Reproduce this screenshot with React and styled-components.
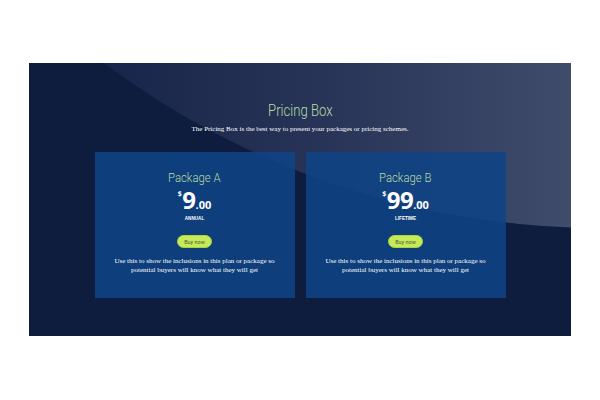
import React from 'react'
import styled, { createGlobalStyle } from 'styled-components'

const GlobalStyle = createGlobalStyle`
  html, body {
    margin: 0;
    padding: 0;
    background: #ffffff;
  }
  #root {
    width: 600px;
    height: 400px;
    padding: 63px 29px;
    box-sizing: border-box;
  }
`

const Section = styled.section`
  position: relative;
  overflow: hidden;
  height: 273px;
  background: #0e1c3e;
  display: flex;
  flex-direction: column;
  align-items: center;
  padding-top: 37px;
  box-sizing: border-box;

  &::before {
    content: '';
    position: absolute;
    left: -257px;
    top: -1491px;
    width: 1656px;
    height: 1656px;
    border-radius: 50%;
    background: linear-gradient(90deg, #18254a 330px, #283558 560px, #3f4c6b 800px);
  }
`

const Title = styled.h1`
  position: relative;
  margin: 0;
  font-family: Roboto, "Liberation Sans", sans-serif;
  font-weight: 300;
  font-size: 16px;
  line-height: 22px;
  color: #b9dca2;
  transform: scaleX(0.82);
`

const Subtitle = styled.p`
  position: relative;
  margin: 2px 0 0;
  font-family: "Liberation Serif", serif;
  font-size: 7px;
  line-height: 10px;
  color: #ffffff;
`

const Cards = styled.div`
  position: relative;
  display: flex;
  gap: 11px;
  margin-top: 18px;
`

const Card = styled.div`
  width: 200px;
  height: 146px;
  box-sizing: border-box;
  padding-top: 17px;
  background: rgba(14, 68, 134, 0.86);
  display: flex;
  flex-direction: column;
  align-items: center;
`

const PackageName = styled.h2`
  margin: 0;
  font-family: Roboto, "Liberation Sans", sans-serif;
  font-weight: 300;
  font-size: 13.5px;
  line-height: 16px;
  color: #b9dca2;
  transform: scaleX(0.84);
`

const Price = styled.div`
  display: flex;
  align-items: baseline;
  height: 28px;
  line-height: 28px;
  margin-top: 1px;
  font-family: "Open Sans", "Liberation Sans", sans-serif;
  font-weight: 700;
  color: #ffffff;
`

const Currency = styled.span`
  font-size: 7px;
  align-self: flex-start;
  line-height: 16px;
  margin-right: 0.5px;
`

const Amount = styled.span`
  font-size: 24px;
  letter-spacing: -0.5px;
`

const Cents = styled.span`
  font-size: 11px;
`

const Period = styled.div`
  margin-top: 1px;
  font-family: "Liberation Sans", sans-serif;
  font-weight: 700;
  font-size: 4.6px;
  line-height: 8px;
  color: #ffffff;
`

const BuyButton = styled.button`
  margin-top: 12px;
  width: 35px;
  height: 13px;
  padding: 0;
  border: 1px solid #a8d63c;
  border-radius: 7px;
  background: #c6ea5a;
  font-family: Roboto, "Liberation Sans", sans-serif;
  font-size: 5.5px;
  color: #4b5a3a;
  cursor: pointer;
`

const Description = styled.p`
  margin: 9px 0 0;
  width: 170px;
  text-align: center;
  font-family: "Liberation Serif", serif;
  font-size: 7px;
  line-height: 9px;
  color: #ffffff;
`

const packages = [
  { name: 'Package A', amount: '9', period: 'ANNUAL' },
  { name: 'Package B', amount: '99', period: 'LIFETIME' },
]

export default function App() {
  return (
    <>
      <GlobalStyle />
      <Section>
        <Title>Pricing Box</Title>
        <Subtitle>The Pricing Box is the best way to present your packages or pricing schemes.</Subtitle>
        <Cards>
          {packages.map(p => (
            <Card key={p.name}>
              <PackageName>{p.name}</PackageName>
              <Price>
                <Currency>$</Currency>
                <Amount>{p.amount}</Amount>
                <Cents>.00</Cents>
              </Price>
              <Period>{p.period}</Period>
              <BuyButton>Buy now</BuyButton>
              <Description>
                Use this to show the inclusions in this plan or package so potential buyers will know what they will get
              </Description>
            </Card>
          ))}
        </Cards>
      </Section>
    </>
  )
}
